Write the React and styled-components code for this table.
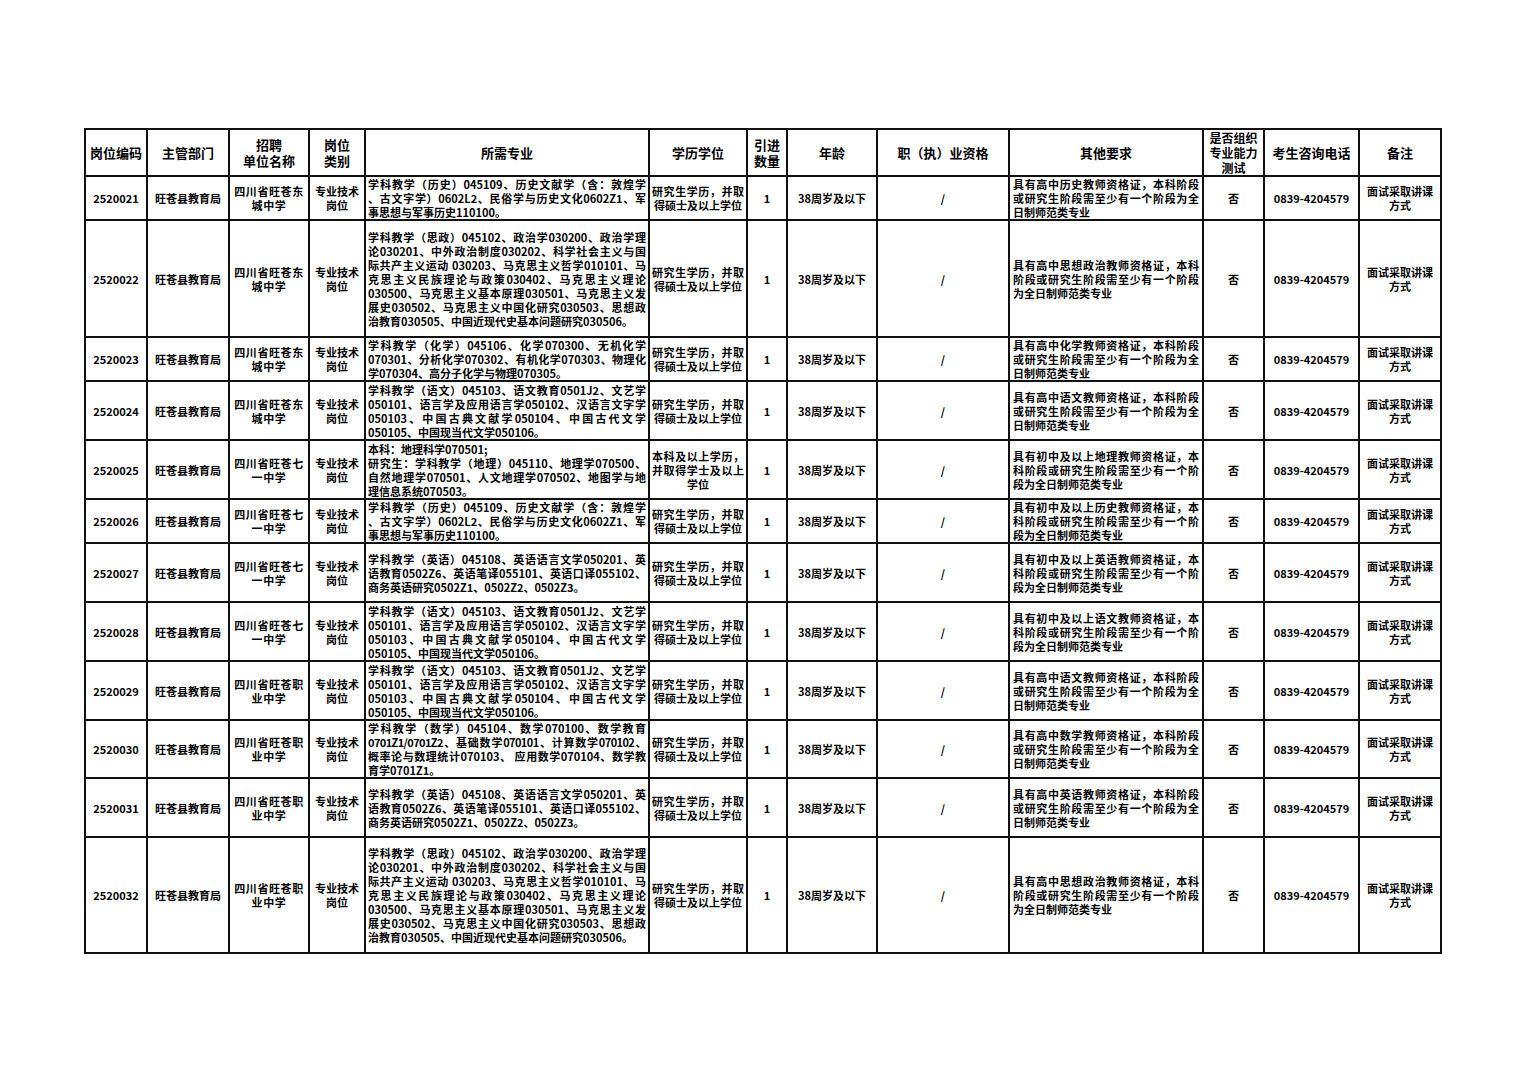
import React from "react";
import styled, { createGlobalStyle } from "styled-components";

const Global = createGlobalStyle`
  html, body { margin: 0; padding: 0; background: #fff; }
  body {
    font-family: "Noto Sans CJK SC", "Noto Sans", sans-serif;
    color: #000;
  }
`;

const Page = styled.div`
  width: 1528px;
  min-height: 1080px;
  padding: 128px 0 0 84px;
  box-sizing: border-box;
`;

const Sheet = styled.div`
  display: grid;
  grid-template-columns: 62px 82px 80px 56px 284px 98px 40px 90px 132px 194px 61px 95px 82px;
  grid-template-rows: 47px 44px 117px 44px 59px 59px 44px 59px 59px 59px 58px 59px 116px;
  width: max-content;
  border-left: 2px solid #111;
  border-top: 2px solid #111;
`;

const Cell = styled.div`
  box-sizing: border-box;
  border-right: 2px solid #111;
  border-bottom: 2px solid #111;
  display: flex;
  align-items: center;
  justify-content: center;
  padding: 0 ${(p) => (p.$pad != null ? p.$pad : 2)}px;
  overflow: hidden;
  font-weight: 700;
  font-size: ${(p) => (p.$fs ? p.$fs : p.$head ? 13 : 11)}px;
  line-height: ${(p) => (p.$lh ? p.$lh : p.$head ? 16 : 14)}px;
  letter-spacing: ${(p) => (p.$wide ? "0.6px" : "normal")};
  text-align: center;
`;

const Block = styled.div`
  width: 100%;
`;

const Line = styled.div`
  display: block;
  text-align: ${(p) => p.$align};
  text-align-last: ${(p) => p.$align};
  letter-spacing: ${(p) => (p.$tight ? "-0.6px" : "inherit")};
`;

const Text = ({ lines, last = "left", first = "justify" }) => (
  <Block>
    {lines.map((l, i) => {
      const isObj = typeof l === "object";
      const text = isObj ? l.t : l;
      const align =
        isObj && l.a ? l.a : i === lines.length - 1 ? last : first;
      return (
        <Line key={i} $align={align} $tight={isObj && l.tight}>
          {text}
        </Line>
      );
    })}
  </Block>
);

const headers = [
  ["岗位编码"],
  ["主管部门"],
  ["招聘", "单位名称"],
  ["岗位", "类别"],
  ["所需专业"],
  ["学历学位"],
  ["引进", "数量"],
  ["年龄"],
  ["职（执）业资格"],
  ["其他要求"],
  ["是否组织", "专业能力", "测试"],
  ["考生咨询电话"],
  ["备注"],
];

const LISHI = [
  "学科教学（历史）045109、历史文献学（含：敦煌学",
  "、古文字学）0602L2、民俗学与历史文化0602Z1、军",
  "事思想与军事历史110100。",
];
const SIZHENG = [
  "学科教学（思政）045102、政治学030200、政治学理",
  "论030201、中外政治制度030202、科学社会主义与国",
  "际共产主义运动 030203、马克思主义哲学010101、马",
  "克思主义民族理论与政策030402、马克思主义理论",
  "030500、马克思主义基本原理030501、马克思主义发",
  "展史030502、马克思主义中国化研究030503、思想政",
  "治教育030505、中国近现代史基本问题研究030506。",
];
const HUAXUE = [
  "学科教学（化学）045106、化学070300、无机化学",
  "070301、分析化学070302、有机化学070303、物理化",
  "学070304、高分子化学与物理070305。",
];
const YUWEN = [
  "学科教学（语文）045103、语文教育0501J2、文艺学",
  "050101、语言学及应用语言学050102、汉语言文字学",
  "050103、中国古典文献学050104、中国古代文学",
  "050105、中国现当代文学050106。",
];
const DILI = [
  { t: "本科：地理科学070501;", a: "left" },
  "研究生：学科教学（地理）045110、地理学070500、",
  "自然地理学070501、人文地理学070502、地图学与地",
  "理信息系统070503。",
];
const YINGYU = [
  "学科教学（英语）045108、英语语言文学050201、英",
  "语教育0502Z6、英语笔译055101、英语口译055102、",
  "商务英语研究0502Z1、0502Z2、0502Z3。",
];
const SHUXUE = [
  "学科教学（数学）045104、数学070100、数学教育",
  { t: "0701Z1/0701Z2、基础数学070101、计算数学070102、", tight: true },
  "概率论与数理统计070103、 应用数学070104、数学教",
  "育学0701Z1。",
];

const gaozhong = (s) => [
  `具有高中${s}教师资格证，本科阶段`,
  "或研究生阶段需至少有一个阶段为全",
  "日制师范类专业",
];
const chuzhong = (s) => [
  `具有初中及以上${s}教师资格证，本`,
  "科阶段或研究生阶段需至少有一个阶",
  "段为全日制师范类专业",
];
const SZ_OTHER = [
  "具有高中思想政治教师资格证，本科",
  "阶段或研究生阶段需至少有一个阶段",
  "为全日制师范类专业",
];

const YJS = ["研究生学历，并取", "得硕士及以上学位"];
const BK = ["本科及以上学历，", "并取得学士及以上", "学位"];

const DONG = ["四川省旺苍东", "城中学"];
const QI = ["四川省旺苍七", "一中学"];
const ZHI = ["四川省旺苍职", "业中学"];

const rows = [
  ["2520021", DONG, LISHI, YJS, gaozhong("历史")],
  ["2520022", DONG, SIZHENG, YJS, SZ_OTHER],
  ["2520023", DONG, HUAXUE, YJS, gaozhong("化学")],
  ["2520024", DONG, YUWEN, YJS, gaozhong("语文")],
  ["2520025", QI, DILI, BK, chuzhong("地理")],
  ["2520026", QI, LISHI, YJS, chuzhong("历史")],
  ["2520027", QI, YINGYU, YJS, chuzhong("英语")],
  ["2520028", QI, YUWEN, YJS, chuzhong("语文")],
  ["2520029", ZHI, YUWEN, YJS, gaozhong("语文")],
  ["2520030", ZHI, SHUXUE, YJS, gaozhong("数学")],
  ["2520031", ZHI, YINGYU, YJS, gaozhong("英语")],
  ["2520032", ZHI, SIZHENG, YJS, SZ_OTHER],
];

const Centered = ({ lines }) => (
  <Block>
    {lines.map((l, i) => (
      <Line key={i} $align="center">
        {l}
      </Line>
    ))}
  </Block>
);

export default function App() {
  return (
    <Page>
      <Global />
      <Sheet>
        {headers.map((h, i) => (
          <Cell
            key={"h" + i}
            $head
            $pad={1}
            $fs={h.length > 2 ? 12 : null}
            $lh={h.length > 2 ? 15 : null}
          >
            <Centered lines={h} />
          </Cell>
        ))}
        {rows.map(([code, unit, major, edu, other]) => (
          <React.Fragment key={code}>
            <Cell>{code}</Cell>
            <Cell>旺苍县教育局</Cell>
            <Cell $wide>
              <Centered lines={unit} />
            </Cell>
            <Cell $pad={1}>
              <Centered lines={["专业技术", "岗位"]} />
            </Cell>
            <Cell $pad={2}>
              <Text lines={major} last="left" />
            </Cell>
            <Cell $pad={2}>
              <Text lines={edu} last="center" />
            </Cell>
            <Cell>1</Cell>
            <Cell>38周岁及以下</Cell>
            <Cell>/</Cell>
            <Cell $pad={3}>
              <Text lines={other} last="left" />
            </Cell>
            <Cell>否</Cell>
            <Cell>0839-4204579</Cell>
            <Cell>
              <Centered lines={["面试采取讲课", "方式"]} />
            </Cell>
          </React.Fragment>
        ))}
      </Sheet>
    </Page>
  );
}
